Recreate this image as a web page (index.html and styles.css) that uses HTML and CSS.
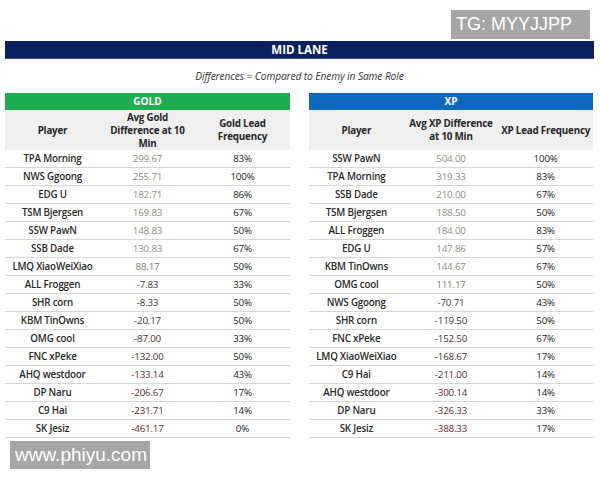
FILE: index.html
```html
<!DOCTYPE html>
<html>
<head>
<meta charset="utf-8">
<link rel="stylesheet" href="styles.css">
</head>
<body>
<div class="page">
  <div class="wm wm-top">TG: MYYJJPP</div>
  <div class="title">MID LANE</div>
  <div class="subtitle">Differences = Compared to Enemy in Same Role</div>
  <div class="tables">
    <div class="table">
      <div class="band band-gold">GOLD</div>
      <div class="row head">
        <div>Player</div>
        <div>Avg Gold<br>Difference at 10<br>Min</div>
        <div>Gold Lead<br>Frequency</div>
      </div>
      <div class="row"><div>TPA Morning</div><div class="pos">299.67</div><div class="pct">83%</div></div>
      <div class="row"><div>NWS Ggoong</div><div class="pos">255.71</div><div class="pct">100%</div></div>
      <div class="row"><div>EDG U</div><div class="pos">182.71</div><div class="pct">86%</div></div>
      <div class="row"><div>TSM Bjergsen</div><div class="pos">169.83</div><div class="pct">67%</div></div>
      <div class="row"><div>SSW PawN</div><div class="pos">148.83</div><div class="pct">50%</div></div>
      <div class="row"><div>SSB Dade</div><div class="pos">130.83</div><div class="pct">67%</div></div>
      <div class="row"><div>LMQ XiaoWeiXiao</div><div class="pos2">88.17</div><div class="pct">50%</div></div>
      <div class="row"><div>ALL Froggen</div><div class="neu">-7.83</div><div class="pct">33%</div></div>
      <div class="row"><div>SHR corn</div><div class="neu">-8.33</div><div class="pct">50%</div></div>
      <div class="row"><div>KBM TinOwns</div><div class="neu">-20.17</div><div class="pct">50%</div></div>
      <div class="row"><div>OMG cool</div><div class="neg1">-87.00</div><div class="pct">33%</div></div>
      <div class="row"><div>FNC xPeke</div><div class="neg1">-132.00</div><div class="pct">50%</div></div>
      <div class="row"><div>AHQ westdoor</div><div class="neg2">-133.14</div><div class="pct">43%</div></div>
      <div class="row"><div>DP Naru</div><div class="neg2">-206.67</div><div class="pct">17%</div></div>
      <div class="row"><div>C9 Hai</div><div class="neg2">-231.71</div><div class="pct">14%</div></div>
      <div class="row"><div>SK Jesiz</div><div class="neg3">-461.17</div><div class="pct">0%</div></div>
    </div>
    <div class="table">
      <div class="band band-xp">XP</div>
      <div class="row head">
        <div>Player</div>
        <div>Avg XP Difference<br>at 10 Min</div>
        <div>XP Lead Frequency</div>
      </div>
      <div class="row"><div>SSW PawN</div><div class="pos">504.00</div><div class="pct">100%</div></div>
      <div class="row"><div>TPA Morning</div><div class="pos">319.33</div><div class="pct">83%</div></div>
      <div class="row"><div>SSB Dade</div><div class="pos">210.00</div><div class="pct">67%</div></div>
      <div class="row"><div>TSM Bjergsen</div><div class="pos">188.50</div><div class="pct">50%</div></div>
      <div class="row"><div>ALL Froggen</div><div class="pos">184.00</div><div class="pct">83%</div></div>
      <div class="row"><div>EDG U</div><div class="pos">147.86</div><div class="pct">57%</div></div>
      <div class="row"><div>KBM TinOwns</div><div class="pos">144.67</div><div class="pct">67%</div></div>
      <div class="row"><div>OMG cool</div><div class="pos2">111.17</div><div class="pct">50%</div></div>
      <div class="row"><div>NWS Ggoong</div><div class="neu">-70.71</div><div class="pct">43%</div></div>
      <div class="row"><div>SHR corn</div><div class="neu">-119.50</div><div class="pct">50%</div></div>
      <div class="row"><div>FNC xPeke</div><div class="neg1">-152.50</div><div class="pct">67%</div></div>
      <div class="row"><div>LMQ XiaoWeiXiao</div><div class="neg1">-168.67</div><div class="pct">17%</div></div>
      <div class="row"><div>C9 Hai</div><div class="neg2">-211.00</div><div class="pct">14%</div></div>
      <div class="row"><div>AHQ westdoor</div><div class="neg2">-300.14</div><div class="pct">14%</div></div>
      <div class="row"><div>DP Naru</div><div class="neg3">-326.33</div><div class="pct">33%</div></div>
      <div class="row"><div>SK Jesiz</div><div class="neg3">-388.33</div><div class="pct">17%</div></div>
    </div>
  </div>
  <div class="wm wm-bottom">www.phiyu.com</div>
</div>
</body>
</html>
```

FILE: styles.css
```css
* { box-sizing: border-box; }
html, body { margin: 0; padding: 0; background: #ffffff; }
body {
  width: 600px;
  height: 480px;
  overflow: hidden;
  font-family: "Open Sans", "Noto Sans", sans-serif;
  color: #222222;
}
.page {
  position: relative;
  padding: 41px 6px 0 5px;
  height: 480px;
}
.title {
  height: 18px;
  background: #0b205e;
  border-bottom: 1px solid #3a4f86;
  color: #ffffff;
  font-weight: 700;
  font-size: 11.5px;
  line-height: 17px;
  text-align: center;
}
.subtitle {
  height: 34px;
  line-height: 34px;
  text-align: center;
  font-style: italic;
  font-size: 10.2px;
  color: #333333;
  letter-spacing: -0.1px;
}
.tables {
  display: grid;
  grid-template-columns: 285px 284px;
  column-gap: 19px;
}
.band {
  height: 17px;
  line-height: 17px;
  color: #ffffff;
  font-weight: 700;
  font-size: 10px;
  text-align: center;
}
.band-gold { background: #20ad4f; }
.band-xp { background: #1068be; }
.row {
  display: grid;
  grid-template-columns: 1fr 1fr 1fr;
  height: 18px;
  border-bottom: 1px solid #d6d6d6;
  font-size: 9.8px;
  font-weight: 600;
  align-items: center;
  text-align: center;
  letter-spacing: -0.2px;
  color: #2a2a2a;
}
.row.head {
  height: 40px;
  background: #efefef;
  border-bottom: none;
  line-height: 13px;
  font-weight: 700;
  font-size: 9.8px;
  color: #262626;
}
.row div { white-space: nowrap; }
.pct { font-weight: 400; color: #1e1e1e; }
.pos { color: #8e8e86; font-weight: 400; }
.pos2 { color: #7d7d70; font-weight: 400; }
.neu { color: #3a3a3a; font-weight: 400; }
.neg1 { color: #4a3036; font-weight: 400; }
.neg2 { color: #5c2c38; font-weight: 400; }
.neg3 { color: #6c2636; font-weight: 400; }
.wm {
  position: absolute;
  background: #a6a6a6;
  color: #ffffff;
  font-family: "Liberation Sans", Arial, sans-serif;
  font-size: 18px;
  line-height: 29px;
}
.wm-top {
  left: 451px;
  top: 10px;
  width: 139px;
  height: 29px;
  padding-left: 5px;
}
.wm-bottom {
  left: 10px;
  top: 441px;
  width: 140px;
  height: 28px;
  padding-left: 5px;
  font-size: 19px;
  line-height: 28px;
}
```
